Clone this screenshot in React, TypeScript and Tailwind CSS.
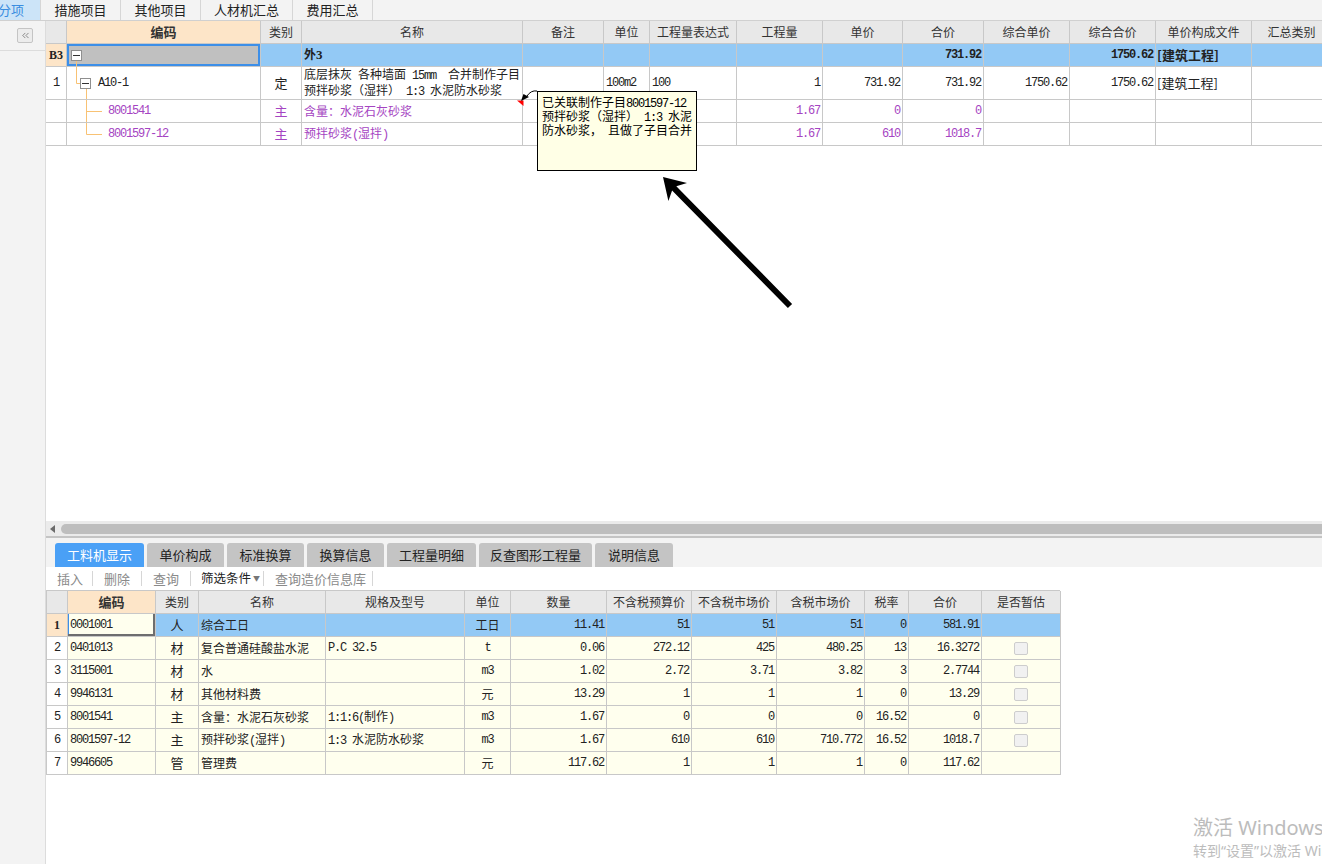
import { ChevronsLeft } from "lucide-react";
import type { ReactNode } from "react";

const M = "font-['Liberation_Mono',monospace] text-[12px] tracking-[-1.2px]";
const CELL = "flex shrink-0 items-center overflow-hidden whitespace-pre border-r border-b border-[#c8c8c8]";
const TREE = "#f8c274";
const BLUE = "bg-[#93c9f5]";
const PURPLE = "text-[#a544c2]";

// top grid columns
const TW = ["w-[21px]", "w-[194px]", "w-[41px]", "w-[221px]", "w-[81px]", "w-[46px]", "w-[87px]", "w-[86px]", "w-[80px]", "w-[81px]", "w-[86px]", "w-[86px]", "w-[96px]", "w-[80px]"];
const TOP_HEAD = ["", "编码", "类别", "名称", "备注", "单位", "工程量表达式", "工程量", "单价", "合价", "综合单价", "综合合价", "单价构成文件", "汇总类别"];

// bottom grid columns
const BW = ["w-[21px]", "w-[88px]", "w-[43px]", "w-[127px]", "w-[139px]", "w-[46px]", "w-[96px]", "w-[85px]", "w-[85px]", "w-[88px]", "w-[44px]", "w-[73px]", "w-[79px]"];
const BOT_HEAD = ["", "编码", "类别", "名称", "规格及型号", "单位", "数量", "不含税预算价", "不含税市场价", "含税市场价", "税率", "合价", "是否暂估"];

const N = ({ children }: { children: ReactNode }) => <span className={M}>{children}</span>;

function Cell({ w, className = "", children }: { w: string; className?: string; children?: ReactNode }) {
  return <div className={`${CELL} ${w} ${className}`}>{children}</div>;
}

function Minus() {
  return (
    <span className="flex h-[11px] w-[11px] shrink-0 items-center justify-center border border-[#8f8f8f] bg-white">
      <span className="h-px w-[7px] bg-[#333]" />
    </span>
  );
}

type Part = {
  code: string; type: string; name: ReactNode; spec: ReactNode; unit: ReactNode;
  qty: string; p1: string; p2: string; p3: string; tax: string; total: string; chk: boolean;
};

const parts: Part[] = [
  { code: "0001001", type: "人", name: "综合工日", spec: "", unit: "工日", qty: "11.41", p1: "51", p2: "51", p3: "51", tax: "0", total: "581.91", chk: false },
  { code: "0401013", type: "材", name: "复合普通硅酸盐水泥", spec: <N>P.C 32.5</N>, unit: <N>t</N>, qty: "0.06", p1: "272.12", p2: "425", p3: "480.25", tax: "13", total: "16.3272", chk: true },
  { code: "3115001", type: "材", name: "水", spec: "", unit: <N>m3</N>, qty: "1.02", p1: "2.72", p2: "3.71", p3: "3.82", tax: "3", total: "2.7744", chk: true },
  { code: "9946131", type: "材", name: "其他材料费", spec: "", unit: "元", qty: "13.29", p1: "1", p2: "1", p3: "1", tax: "0", total: "13.29", chk: true },
  { code: "8001541", type: "主", name: "含量：水泥石灰砂浆", spec: <span><N>1:1:6(</N>制作<N>)</N></span>, unit: <N>m3</N>, qty: "1.67", p1: "0", p2: "0", p3: "0", tax: "16.52", total: "0", chk: true },
  { code: "8001597-12", type: "主", name: <span>预拌砂浆<N>(</N>湿拌<N>)</N></span>, spec: <span><N>1:3 </N>水泥防水砂浆</span>, unit: <N>m3</N>, qty: "1.67", p1: "610", p2: "610", p3: "710.772", tax: "16.52", total: "1018.7", chk: true },
  { code: "9946605", type: "管", name: "管理费", spec: "", unit: "元", qty: "117.62", p1: "1", p2: "1", p3: "1", tax: "0", total: "117.62", chk: false },
];

const subTabs = [
  { t: "工料机显示", w: "w-[89px]" },
  { t: "单价构成", w: "w-[77px]" },
  { t: "标准换算", w: "w-[77px]" },
  { t: "换算信息", w: "w-[77px]" },
  { t: "工程量明细", w: "w-[89px]" },
  { t: "反查图形工程量", w: "w-[113px]" },
  { t: "说明信息", w: "w-[78px]" },
];

function TopGrid() {
  const R = "justify-end pr-[2px]";
  return (
    <div className="text-[12px] text-[#222]">
      <div className="flex h-[23px] bg-[#e8e8e8] text-[#333]">
        {TOP_HEAD.map((h, i) => (
          <Cell key={i} w={TW[i]} className={`justify-center ${i === 1 ? "bg-[#fde5c8] text-[13px] font-bold" : ""}`}>{h}</Cell>
        ))}
      </div>

      {/* B3 */}
      <div className={`flex h-[23px] ${BLUE} font-bold`}>
        <Cell w={TW[0]} className="justify-center bg-[#fde5c8] font-['Liberation_Serif',serif] text-[12px]">B3</Cell>
        <Cell w={TW[1]} className="relative bg-[#c0c0c0] pl-[4px] shadow-[inset_0_0_0_2px_#3d8fe8]">
          <Minus />
          <svg className="absolute inset-0" width="194" height="23">
            <line x1="9.5" y1="17" x2="9.5" y2="23" stroke={TREE} />
          </svg>
        </Cell>
        <Cell w={TW[2]} />
        <Cell w={TW[3]} className="pl-[2px]"><span>外<span className="font-['Liberation_Serif',serif] text-[13px]">3</span></span></Cell>
        <Cell w={TW[4]} /><Cell w={TW[5]} /><Cell w={TW[6]} /><Cell w={TW[7]} /><Cell w={TW[8]} />
        <Cell w={TW[9]} className={R}><span className={`${M} font-bold`}>731.92</span></Cell>
        <Cell w={TW[10]} />
        <Cell w={TW[11]} className={R}><span className={`${M} font-bold`}>1750.62</span></Cell>
        <Cell w={TW[12]} className="pl-[1px] text-[13px]">[建筑工程]</Cell>
        <Cell w={TW[13]} />
      </div>

      {/* 1 */}
      <div className="flex h-[33px] bg-white">
        <Cell w={TW[0]} className="justify-center"><N>1</N></Cell>
        <Cell w={TW[1]} className="relative pl-[13px]">
          <svg className="absolute inset-0" width="194" height="33">
            <line x1="9.5" y1="0" x2="9.5" y2="16.5" stroke={TREE} />
            <line x1="9.5" y1="16.5" x2="13" y2="16.5" stroke={TREE} />
            <line x1="19.5" y1="22" x2="19.5" y2="33" stroke={TREE} />
          </svg>
          <Minus />
          <span className={`${M} ml-[7px]`}>A10-1</span>
        </Cell>
        <Cell w={TW[2]} className="justify-center text-[13px]">定</Cell>
        <Cell w={TW[3]} className="flex-col !items-start justify-center pl-[2px] leading-[13px]">
          <div className="whitespace-pre">底层抹灰<N> </N>各种墙面<N> 15mm  </N>合并制作子目</div>
          <div className="whitespace-pre">预拌砂浆（湿拌）<N> 1:3 </N>水泥防水砂浆</div>
        </Cell>
        <Cell w={TW[4]} />
        <Cell w={TW[5]} className="pl-[2px]"><N>100m2</N></Cell>
        <Cell w={TW[6]} className="pl-[2px]"><N>100</N></Cell>
        <Cell w={TW[7]} className={R}><N>1</N></Cell>
        <Cell w={TW[8]} className={R}><N>731.92</N></Cell>
        <Cell w={TW[9]} className={R}><N>731.92</N></Cell>
        <Cell w={TW[10]} className={R}><N>1750.62</N></Cell>
        <Cell w={TW[11]} className={R}><N>1750.62</N></Cell>
        <Cell w={TW[12]} className="pl-[1px] text-[13px]">[建筑工程]</Cell>
        <Cell w={TW[13]} />
      </div>

      {[
        { code: "8001541", name: <span>含量：水泥石灰砂浆</span>, last: false, p: "0", t: "0" },
        { code: "8001597-12", name: <span>预拌砂浆<N>(</N>湿拌<N>)</N></span>, last: true, p: "610", t: "1018.7" },
      ].map((r) => (
        <div key={r.code} className={`flex h-[23px] bg-white ${PURPLE}`}>
          <Cell w={TW[0]} />
          <Cell w={TW[1]} className="relative pl-[41px]">
            <svg className="absolute inset-0" width="194" height="23">
              <line x1="19.5" y1="0" x2="19.5" y2={r.last ? "11.5" : "23"} stroke={TREE} />
              <line x1="19.5" y1="11.5" x2="35" y2="11.5" stroke={TREE} />
            </svg>
            <N>{r.code}</N>
          </Cell>
          <Cell w={TW[2]} className="justify-center text-[13px]">主</Cell>
          <Cell w={TW[3]} className="pl-[2px] text-[12px]">{r.name}</Cell>
          <Cell w={TW[4]} /><Cell w={TW[5]} /><Cell w={TW[6]} />
          <Cell w={TW[7]} className={R}><N>1.67</N></Cell>
          <Cell w={TW[8]} className={R}><N>{r.p}</N></Cell>
          <Cell w={TW[9]} className={R}><N>{r.t}</N></Cell>
          <Cell w={TW[10]} /><Cell w={TW[11]} /><Cell w={TW[12]} /><Cell w={TW[13]} />
        </div>
      ))}
    </div>
  );
}

function BottomGrid() {
  const R = "justify-end pr-[2px]";
  return (
    <div className="w-[1014px] border-l border-t border-[#c8c8c8] text-[12px] text-[#222]">
      <div className="flex h-[23px] bg-[#e8e8e8] text-[#333]">
        {BOT_HEAD.map((h, i) => (
          <Cell key={i} w={BW[i]} className={`justify-center ${i === 1 ? "bg-[#fde5c8] text-[13px] font-bold" : ""}`}>{h}</Cell>
        ))}
      </div>
      {parts.map((p, i) => {
        const sel = i === 0;
        const bg = sel ? BLUE : "bg-[#ffffee]";
        return (
          <div key={p.code} className="flex h-[23px]">
            <Cell w={BW[0]} className={`justify-center ${sel ? "bg-[#fde5c8] font-['Liberation_Serif',serif] font-bold" : "bg-white"}`}>
              {sel ? "1" : <N>{i + 1}</N>}
            </Cell>
            <Cell w={BW[1]} className={`bg-[#ffffee] pl-[2px] ${sel ? "shadow-[inset_-2px_-2px_0_#6e6e6e,inset_1px_0_0_#3d8fe8]" : ""}`}><N>{p.code}</N></Cell>
            <Cell w={BW[2]} className={`${bg} justify-center text-[13px]`}>{p.type}</Cell>
            <Cell w={BW[3]} className={`${bg} pl-[2px]`}>{p.name}</Cell>
            <Cell w={BW[4]} className={`${bg} pl-[2px]`}>{p.spec}</Cell>
            <Cell w={BW[5]} className={`${bg} justify-center`}>{p.unit}</Cell>
            <Cell w={BW[6]} className={`${bg} ${R}`}><N>{p.qty}</N></Cell>
            <Cell w={BW[7]} className={`${bg} ${R}`}><N>{p.p1}</N></Cell>
            <Cell w={BW[8]} className={`${bg} ${R}`}><N>{p.p2}</N></Cell>
            <Cell w={BW[9]} className={`${bg} ${R}`}><N>{p.p3}</N></Cell>
            <Cell w={BW[10]} className={`${bg} ${R}`}><N>{p.tax}</N></Cell>
            <Cell w={BW[11]} className={`${bg} ${R}`}><N>{p.total}</N></Cell>
            <Cell w={BW[12]} className={`${bg} justify-center`}>
              {p.chk && <span className="h-[13px] w-[14px] rounded-[2px] border border-[#cdcdcd] bg-[#f1f1f1]" />}
            </Cell>
          </div>
        );
      })}
    </div>
  );
}

export default function App() {
  return (
    <div className="relative h-[864px] w-[1322px] overflow-hidden bg-white font-['Noto_Sans_CJK_SC',sans-serif] text-[#222]">
      {/* page tabs */}
      <div className="flex h-[21px] border-b border-[#d0d0d0] bg-[#f3f3f3] text-[13px] leading-[20px]">
        <div className="w-[41px] overflow-hidden whitespace-nowrap border-r border-[#d6d6d6] bg-[#cce4f8] text-[#3a8de0]">
          <span className="-ml-[2px]">分项</span>
        </div>
        {[
          { t: "措施项目", w: "w-[80px]" },
          { t: "其他项目", w: "w-[80px]" },
          { t: "人材机汇总", w: "w-[92px]" },
          { t: "费用汇总", w: "w-[80px]" },
        ].map((t) => (
          <div key={t.t} className={`${t.w} border-r border-[#d6d6d6] text-center`}>{t.t}</div>
        ))}
      </div>

      <div className="flex h-[843px]">
        <aside className="w-[46px] shrink-0 border-r border-[#dcdcdc] bg-[#f3f3f3]">
          <div className="h-[30px] border-b border-[#dcdcdc] pl-[17px] pt-[7px]">
            <div className="flex h-[15px] w-[16px] items-center justify-center rounded-[2px] border border-[#c4c4c4] bg-[#ececec]">
              <ChevronsLeft className="h-[11px] w-[11px] text-[#666]" strokeWidth={1.6} />
            </div>
          </div>
        </aside>

        <main className="flex min-w-0 flex-1 flex-col overflow-hidden">
          <section className="h-[500px] overflow-hidden bg-white">
            <TopGrid />
          </section>

          {/* horizontal scroll bar */}
          <div className="flex h-[15px] items-start bg-[#ebebeb]">
            <span className="ml-[4px] mt-[4px] h-0 w-0 border-y-[4px] border-r-[5px] border-y-transparent border-r-[#6b6b6b]" />
            <span className="ml-[6px] mt-[3px] h-[10px] flex-1 rounded-l-full bg-[#bebebe]" />
          </div>
          <div className="h-[2px] bg-[#c4c4c4]" />

          {/* detail panel */}
          <div className="flex h-[29px] items-end gap-[3px] bg-[#f3f3f3] pl-[9px] text-[13px]">
            {subTabs.map((t, i) => (
              <div
                key={t.t}
                className={`${t.w} flex h-[24px] items-center justify-center rounded-t-[3px] ${i === 0 ? "bg-[#4aa0f6] text-white" : "bg-[#c4c4c4] text-[#222]"}`}
              >
                {t.t}
              </div>
            ))}
          </div>
          <div className="flex h-[23px] items-center whitespace-nowrap text-[13px] text-[#8a8a8a]">
            {[
              { t: "插入", w: "w-[47px]", on: false },
              { t: "删除", w: "w-[49px]", on: false },
              { t: "查询", w: "w-[49px]", on: false },
              { t: "筛选条件", w: "w-[73px]", on: true },
              { t: "查询造价信息库", w: "w-[109px]", on: false },
            ].map((b) => (
              <div key={b.t} className={`${b.w} flex items-center ${b.on ? "pl-[10px]" : "pl-[11px]"}`}>
                <span className={b.on ? "text-[12.5px] text-[#222]" : ""}>{b.t}</span>
                {b.on && <span className="ml-[2px] text-[7px] text-[#777]">▼</span>}
                <span className="ml-auto h-[15px] w-px shrink-0 bg-[#d6d6d6]" />
              </div>
            ))}
          </div>
          <BottomGrid />
        </main>
      </div>

      {/* note tooltip */}
      <div className="absolute left-[537px] top-[91px] h-[80px] w-[160px] whitespace-pre border border-black bg-[#ffffe6] pl-[4px] pt-[4px] text-[12px] leading-[12px] text-black">
        <div>已关联制作子目<N>8001597-12</N></div>
        <div>预拌砂浆（湿拌）<N> 1:3 </N>水泥</div>
        <div>防水砂浆，<N> </N>且做了子目合并</div>
      </div>

      <svg className="pointer-events-none absolute inset-0" width="1322" height="864">
        <polygon points="517,100.5 523.5,100.5 523.5,106" fill="#ff0000" />
        <path d="M537,91 Q531,90 527,96" stroke="#000" strokeWidth="1" fill="none" />
        <polygon points="521,101 523.5,94 529,97" fill="#000" />
        <polygon
          points="663,177 687,183 676.3,186.3 792.1,303.9 787.9,308.1 672.1,190.5 668.4,201.1"
          fill="#000"
        />
      </svg>

      {/* windows watermark */}
      <div className="pointer-events-none absolute left-[1193px] top-[815px] whitespace-nowrap font-['Noto_Sans','Noto_Sans_CJK_SC',sans-serif] text-[#bcbcbc]">
        <div className="text-[20px] leading-[26px]">激活 Windows</div>
        <div className="text-[14px] leading-[20px]">转到“设置”以激活 Windows。</div>
      </div>
    </div>
  );
}
